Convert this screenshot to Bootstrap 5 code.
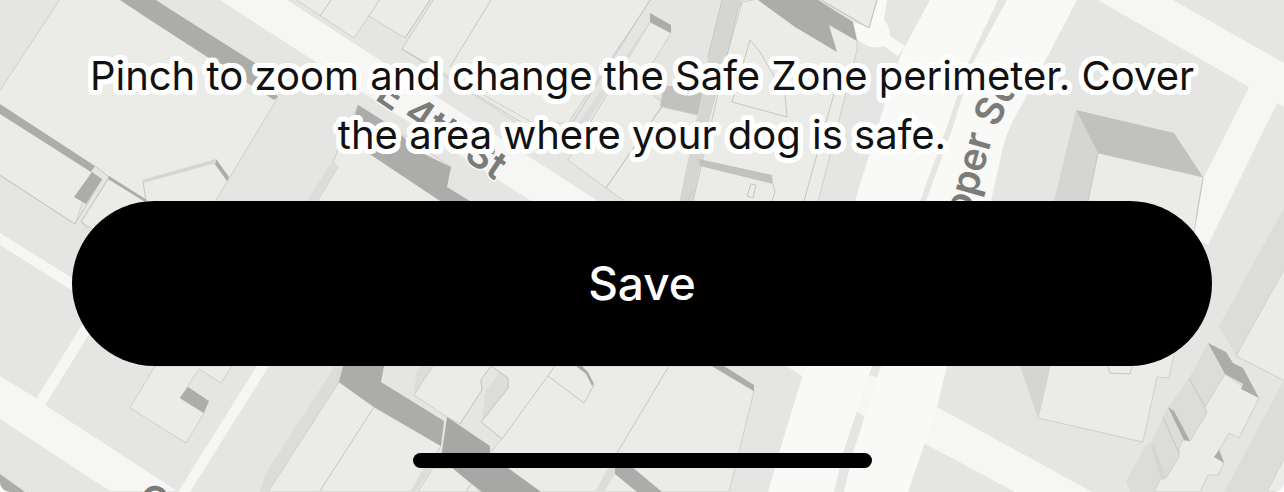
<!DOCTYPE html>
<html lang="en">
<head>
<meta charset="utf-8">
<meta name="viewport" content="width=device-width, initial-scale=1">
<title>Safe Zone</title>
<link href="https://cdn.jsdelivr.net/npm/bootstrap@5.3.0/dist/css/bootstrap.min.css" rel="stylesheet">
<style>
  body { font-family: Inter, "Liberation Sans", sans-serif; background: #fff; }
  .zone-screen { background: #e5e5e3; border-radius: 0 0 10px 10px; padding: 46px 72px 24px; }
  .zone-map { z-index: 0; }
  .zone-content { z-index: 1; }
  .zone-hint {
    font-size: 40px; line-height: 59px; color: #111; margin-bottom: 37px;
    text-shadow: 5px 0 #fff, -5px 0 #fff, 0 5px #fff, 0 -5px #fff,
      4px 4px #fff, -4px 4px #fff, 4px -4px #fff, -4px -4px #fff,
      5px 2px #fff, 5px -2px #fff, -5px 2px #fff, -5px -2px #fff,
      2px 5px #fff, -2px 5px #fff, 2px -5px #fff, -2px -5px #fff,
      2px 2px #fff, -2px 2px #fff, 2px -2px #fff, -2px -2px #fff;
  }
  .zone-save, .zone-save:hover { background: #000; color: #fff; border: 0; height: 165px; font-size: 46px; font-weight: 500; }
  .home-bar { width: 459px; max-width: 50%; height: 15px; background: #000; }
  .ground { fill: #e5e5e3; }
  .street { fill: #f6f6f4; }
  .avenue { fill: #f9f9f7; }
  .roof { fill: #ebece7; stroke: #cfcfcc; stroke-width: 1; }
  .edge { fill: none; stroke: #c6c6c3; stroke-width: 1; }
  .side { fill: #dcdcda; }
  .wall { fill: #d5d5d3; }
  .face { fill: #c1c1bf; }
  .dark { fill: #acacaa; }
  .street-name { font-family: Inter, "Liberation Sans", sans-serif; font-weight: 600; font-size: 39px; fill: #7b7b7a; stroke: #f8f8f6; stroke-width: 3; paint-order: stroke; }
</style>
</head>
<body>
<main class="zone-screen position-relative overflow-hidden min-vh-100 d-flex flex-column">
  <svg class="zone-map position-absolute top-0 start-0 w-100 h-100" viewBox="0 0 1284 492" preserveAspectRatio="xMidYMid slice" aria-hidden="true">
    <!-- streets -->
    <path class="street" d="M220 0H287L870 377V420ZM0 233L90 289V302L0 245ZM82 325L90 333 45 405 36 399ZM0 376L36 398 45 405 177 491H110L0 419ZM257 366H269L190 492H178ZM1098 0H1173L1284 63V107L1277 103 1208 245 1190 235V205L1249 87ZM937 407L1092 492H1015L920 441Z"/>
    <path class="avenue" d="M876 0H887L884 20Q890 26 890 36L905 46 898 56 884 46Q872 51 858 40L853 22 869 28Z"/>
    <path class="avenue" d="M930 0H998L968 63 947 127 920 201 872 366 843 453 834 492H768L785 433 802 378 855 201 896 68 903 50ZM1007 0H1077L1022 105Q1009 125 1003 147L991 201 947 366 937 407 908 492H844L853 453 881 366 926 201 952 130 973 63Z"/>
    <path class="street" d="M870 375L879 378 867 413 858 409Z"/>
    <!-- blocks west of the street -->
    <path class="roof" d="M60 -1H120L277 99 180 260H120L81 222 109 178 95 167 75 224 -1 175V92Z"/>
    <path class="ground" d="M95 166L109 177 82 221 75 223 102 179 92 171Z"/>
    <path class="edge" d="M75 224L102 179M81 222L109 177 95 166M0 175L75 224M81 222L92 229M143 181L146 201"/>
    <path class="dark" d="M120 0H156L165 6 255 63 278 97 274 100 147 18ZM0 104L95 166 91 172 0 114ZM92 172L102 179 86 204 74 197ZM109 176L147 200 145 202 108 179ZM216 159L229 177 227 181 214 163Z"/>
    <path class="wall" d="M142 180L216 159V163L143 183Z"/>
    <path class="roof" d="M358 105L333 162 338 167 317 202H440L451 167Z"/>
    <path class="side" d="M333 162L338 167 317 201H307L329 166Z"/>
    <path class="dark" d="M358 105L390 125 420 152 451 167 447 187 470 201H440L368 153 354 118Z"/>
    <!-- blocks between the street and the avenue -->
    <path class="roof" d="M295 -1L354 38 380 -1ZM369 16L380 -1H431L405 38ZM434 -1L402 49 568 155 650 20V-1Z"/>
    <path class="ground" d="M650 -1H724L700 100 665 100 568 160 540 128 650 0Z"/>
    <path class="roof" d="M434 -1L402 49 533 123H568L651 -1Z" stroke="none"/>
    <path class="edge" d="M320 16L331 0M450 67L491 0M402 49L568 151M405 38L430 0M650 0L567 131"/>
    <path class="side" d="M650 22L586 112 571 132 582 130 650 26Z"/>
    <path class="roof" d="M650 22L671 33 640 84 664 104 606 188 568 160Z"/>
    <path class="roof" d="M606 188L662 107 698 115 680 202H626Z"/>
    <path class="edge" d="M606 188L664 103"/>
    <path class="dark" d="M650 13L671 25V33L650 22Z"/>
    <path class="face" d="M664 86H704L698 115 660 106Z"/>
    <path class="roof" d="M742 2L758 -1H818L857 41V50L818 202H692L710 115Z"/>
    <path class="wall" d="M722 0H742L738 8 726 57 710 115 693 201H680L698 120 708 57Z"/>
    <path class="edge" d="M722 0L708 57M738 8L693 201M742 2L738 8M692 190L688 201M750 40L732 102 787 117 785 95 760 52ZM751 184L756 185 753 198 747 196ZM835 90L804 201M773 184L775 192 772 201"/>
    <path class="face" d="M699 159L772 175 773 184 700 166Z"/>
    <path class="dark" d="M758 0H818L853 22 857 41 829 25 837 52 795 27Z"/>
    <path class="roof" d="M820 -1H877L869 28Z" stroke="#fff"/>
    <path class="edge" d="M877 0L869 28 822 1"/>
    <!-- block under the avenue, right -->
    <path class="roof" d="M1098 153L1203 177 1174 355 1169 378 1157 377 1143 442 1038 418 1050 366Z"/>
    <path class="wall" d="M1076 110L1098 153 1050 366 1038 418 1020 366 1035 280Z"/>
    <path class="face" d="M1076 110L1174 133 1203 177 1098 153Z"/>
    <path class="edge" d="M1108 366L1110 373 1130 374 1132 366M1203 178L1196 220M1098 153L1088 201"/>
    <path class="side" d="M1284 208V268L1236 356 1219 326Z"/>
    <path class="roof" d="M1285 268L1236 356 1285 381ZM1285 457L1267 492H1285Z"/>
    <path class="side" d="M1284 380V457L1267 492H1224Z"/>
    <path class="side" d="M1208 343L1225 374 1205 407 1207 413 1190 441 1179 457 1166 478 1154 492H1130L1126 481 1145 446 1151 443 1163 417 1168 407 1189 378Z"/>
    <path class="roof" d="M1225 374L1259 398 1239 438 1229 433 1219 450 1224 463 1218 475H1208L1200 492H1154L1160 480 1166 478 1179 457V448L1183 440 1190 441 1207 413 1205 407Z"/>
    <path class="edge" d="M1189 378L1205 407M1163 417L1179 453"/>
    <path class="wall" d="M1151 445L1154 446 1166 478 1161 480Z"/>
    <path class="dark" d="M1208 343L1226 352 1233 363 1243 368 1259 398 1241 389 1243 384 1225 374ZM1168 407L1174 411 1190 441 1184 440ZM1219 450L1224 463 1214 457Z"/>
    <!-- blocks below the button -->
    <path class="roof" d="M155 366L130 408 186 443 204 413 180 398 199 369 221 383 232 366Z"/>
    <path class="dark" d="M188 387L209 401 204 413 180 398ZM0 474L25 492H0Z"/>
    <path class="side" d="M335 366H343L339 382 268 492H260L266 473Z"/>
    <path class="roof" d="M339 382L268 492H412L441 446 374 407Z"/>
    <path class="edge" d="M374 407L320 491"/>
    <path class="side" d="M419 366H433L414 395 416 375ZM432 468L415 492H410L424 468Z"/>
    <path class="roof" d="M433 366L414 395 447 417 460 424 482 390 481 380 491 366Z"/>
    <path class="roof" d="M433 468L418 492H481L453 468ZM491 366L508 378V388L481 422 502 439 488 455 541 492H729L754 391 712 366Z"/>
    <path class="ground" d="M491 366L508 378V388L481 422 501 438 490 447 460 424 482 390 481 380Z"/>
    <path class="side" d="M500 372L508 378V388L482 422 486 390ZM608 468L618 450 615 474 604 492H595Z"/>
    <path class="dark" d="M343 366H384L381 382 444 421 441 446 374 407 339 382ZM576 366H582L588 372 594 384 592 386 586 374ZM712 366H724L754 385V391ZM615 466H631L662 492H637L615 474Z"/>
    <path d="M447 417L490 446V455L541 492H482L441 459Z" fill="#a7a7a5"/>
    <path class="edge" d="M669 366L617 453M555 366L502 439 481 422 508 388V378L491 366M460 424L482 390 481 380 491 366M548 376L584 403 594 385M471 484L466 492"/>
    <!-- street names -->
    <text class="street-name" transform="translate(374 99) rotate(34)">E 4th St</text>
    <path id="cooper" d="M935 300L975 200Q984 168 992 140 1000 118 1030 68" fill="none"/>
    <text class="street-name"><textPath href="#cooper" startOffset="34">Cooper Sq</textPath></text>
    <text class="street-name" transform="translate(134 505) rotate(30)">C</text>
  </svg>
  <div class="zone-content position-relative d-flex flex-column flex-grow-1">
    <p class="zone-hint text-center">Pinch to zoom and change the Safe Zone perimeter. Cover the area where your dog is safe.</p>
    <button type="button" class="zone-save btn rounded-pill w-100">Save</button>
    <div class="home-bar rounded-pill mx-auto mt-auto"></div>
  </div>
</main>
<script src="https://cdn.jsdelivr.net/npm/bootstrap@5.3.0/dist/js/bootstrap.bundle.min.js"></script>
</body>
</html>
